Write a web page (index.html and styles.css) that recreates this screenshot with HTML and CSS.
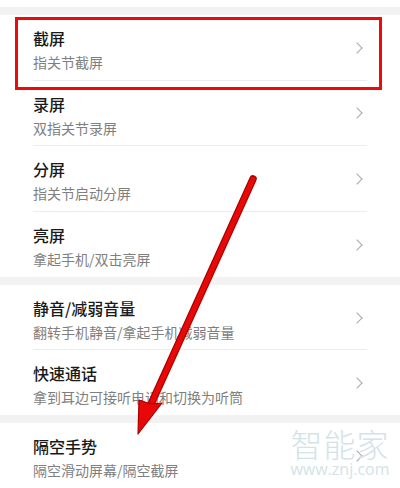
FILE: index.html
```html
<!DOCTYPE html>
<html lang="zh">
<head>
<meta charset="utf-8">
<link rel="stylesheet" href="styles.css">
</head>
<body>
<div class="page">
  <div class="top"></div>
  <div class="gap"></div>
  <section class="group">
    <div class="row"><div class="inner"><div class="text"><div class="title">截屏</div><div class="sub">指关节截屏</div></div><span class="chev"></span></div></div>
    <div class="row"><div class="inner"><div class="text"><div class="title">录屏</div><div class="sub">双指关节录屏</div></div><span class="chev"></span></div></div>
    <div class="row"><div class="inner"><div class="text"><div class="title">分屏</div><div class="sub">指关节启动分屏</div></div><span class="chev"></span></div></div>
    <div class="row last"><div class="inner"><div class="text"><div class="title">亮屏</div><div class="sub">拿起手机/双击亮屏</div></div><span class="chev"></span></div></div>
  </section>
  <div class="gap"></div>
  <section class="group">
    <div class="row g2"><div class="inner"><div class="text"><div class="title">静音/减弱音量</div><div class="sub">翻转手机静音/拿起手机减弱音量</div></div><span class="chev"></span></div></div>
    <div class="row g2 last"><div class="inner"><div class="text"><div class="title">快速通话</div><div class="sub">拿到耳边可接听电话和切换为听筒</div></div><span class="chev"></span></div></div>
  </section>
  <div class="gap"></div>
  <section class="group">
    <div class="row g2 last"><div class="inner"><div class="text"><div class="title">隔空手势</div><div class="sub">隔空滑动屏幕/隔空截屏</div></div><span class="chev"></span></div></div>
  </section>

  <div class="highlight"></div>
  <div class="watermark"><div class="wm-big">智能家</div><div class="wm-small">www.znj.com</div></div>
  <svg class="arrow" width="400" height="488" viewBox="0 0 400 488">
    <line x1="253" y1="179" x2="152" y2="402" stroke="#a80000" stroke-width="7.5" stroke-linecap="round"/>
    <line x1="253" y1="179" x2="152" y2="402" stroke="#e80808" stroke-width="5" stroke-linecap="round"/>
    <polygon points="139,400 151,404 162,403 138,434" fill="#e80808" stroke="#a80000" stroke-width="1.2" stroke-linejoin="round"/>
  </svg>
</div>
</body>
</html>
```

FILE: styles.css
```css
html, body {
  margin: 0;
  padding: 0;
  background: #fff;
}
.page {
  position: relative;
  width: 400px;
  height: 488px;
  overflow: hidden;
  font-family: "Noto Sans CJK SC", "Noto Sans", sans-serif;
}
.top {
  height: 7px;
  background: #fff;
}
.gap {
  height: 8px;
  background: #f2f2f2;
}
.group {
  background: #fff;
}
.row {
  height: 65.5px;
  padding: 0 33px;
  box-sizing: border-box;
}
.row.g2 {
  height: 65px;
}
.inner {
  height: 100%;
  box-sizing: border-box;
  border-bottom: 1px solid #ececec;
  display: flex;
  align-items: center;
  justify-content: space-between;
}
.row.last .inner {
  border-bottom: none;
}
.text {
  align-self: flex-start;
  padding-top: 12px;
}
.title {
  font-size: 16px;
  line-height: 23px;
  color: #1a1a1a;
  font-weight: 500;
}
.sub {
  margin-top: 2px;
  font-size: 14px;
  line-height: 20px;
  color: #7f7f7f;
}
.chev {
  width: 7px;
  height: 7px;
  border-top: 1.3px solid #a8a8a8;
  border-right: 1.3px solid #a8a8a8;
  transform: rotate(45deg);
  margin-right: 6px;
  margin-top: 1px;
}
.highlight {
  position: absolute;
  left: 15px;
  top: 17px;
  width: 367px;
  height: 73px;
  box-sizing: border-box;
  border: 3px solid #ee0a0a;
}
.watermark {
  position: absolute;
  left: 289px;
  top: 425px;
  width: 102px;
  text-align: center;
  color: #d3e3e8;
}
.wm-big {
  font-size: 32px;
  line-height: 36px;
  letter-spacing: 1px;
  font-weight: 300;
}
.wm-small {
  font-family: "Open Sans", "DejaVu Sans", sans-serif;
  font-size: 16px;
  line-height: 17px;
}
.arrow {
  position: absolute;
  left: 0;
  top: 0;
}
```
